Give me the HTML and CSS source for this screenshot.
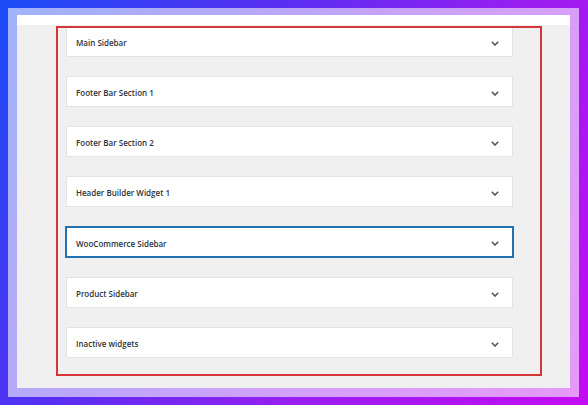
FILE: index.html
```html
<!DOCTYPE html>
<html>
<head>
<meta charset="utf-8">
<link rel="stylesheet" href="styles.css">
</head>
<body>
<div class="frame">
  <div class="page">
    <div class="topbar"></div>
    <div class="content">
      <div class="highlight">
        <div class="panel first"><span>Main Sidebar</span><svg class="chev" viewBox="0 0 8 5"><polyline points="0.8,0.8 4,4 7.2,0.8"/></svg></div>
        <div class="panel"><span>Footer Bar Section 1</span><svg class="chev" viewBox="0 0 8 5"><polyline points="0.8,0.8 4,4 7.2,0.8"/></svg></div>
        <div class="panel"><span>Footer Bar Section 2</span><svg class="chev" viewBox="0 0 8 5"><polyline points="0.8,0.8 4,4 7.2,0.8"/></svg></div>
        <div class="panel"><span>Header Builder Widget 1</span><svg class="chev" viewBox="0 0 8 5"><polyline points="0.8,0.8 4,4 7.2,0.8"/></svg></div>
        <div class="panel active"><span>WooCommerce Sidebar</span><svg class="chev" viewBox="0 0 8 5"><polyline points="0.8,0.8 4,4 7.2,0.8"/></svg></div>
        <div class="panel"><span>Product Sidebar</span><svg class="chev" viewBox="0 0 8 5"><polyline points="0.8,0.8 4,4 7.2,0.8"/></svg></div>
        <div class="panel"><span>Inactive widgets</span><svg class="chev" viewBox="0 0 8 5"><polyline points="0.8,0.8 4,4 7.2,0.8"/></svg></div>
      </div>
    </div>
  </div>
</div>
</body>
</html>
```
FILE: styles.css
```css
html, body {
  margin: 0;
  padding: 0;
}
body {
  width: 588px;
  height: 405px;
  overflow: hidden;
  background: linear-gradient(120deg, #1a4cf5 0%, #5a2ef2 35%, #9a1ef0 65%, #c40cf0 100%);
  font-family: "Open Sans", "Noto Sans", sans-serif;
}
.frame {
  margin: 8px 9px 8px 8px;
  height: 373px;
  padding: 7px 9px 9px 9px;
  background: rgba(255, 255, 255, 0.58);
}
.page {
  height: 373px;
  background: #f0f0f0;
  display: flex;
  flex-direction: column;
}
.topbar {
  height: 10px;
  background: #ffffff;
}
.content {
  flex: 1;
  padding: 1px 0 0 39px;
}
.highlight {
  width: 447px;
  height: 329px;
  border: 2px solid #d63638;
  padding: 0 27px 17px 8px;
  overflow: hidden;
  display: flex;
  flex-direction: column;
  gap: 19px;
}
.panel {
  flex: none;
  height: 29px;
  background: #ffffff;
  border: 1px solid #e4e4e4;
  display: flex;
  align-items: center;
  justify-content: space-between;
  padding: 0 13px 0 9px;
  font-size: 8px;
  font-weight: 600;
  color: #2c3338;
}
.panel.first {
  margin-top: -2px;
}
.panel span {
  padding-top: 2px;
}
.panel.active {
  border: 2px solid #2271b1;
  margin: 0 -1px;
  height: 28px;
}
.chev {
  width: 8px;
  height: 5px;
  margin-top: 3px;
  fill: none;
  stroke: #50575e;
  stroke-width: 1.6;
}
```
